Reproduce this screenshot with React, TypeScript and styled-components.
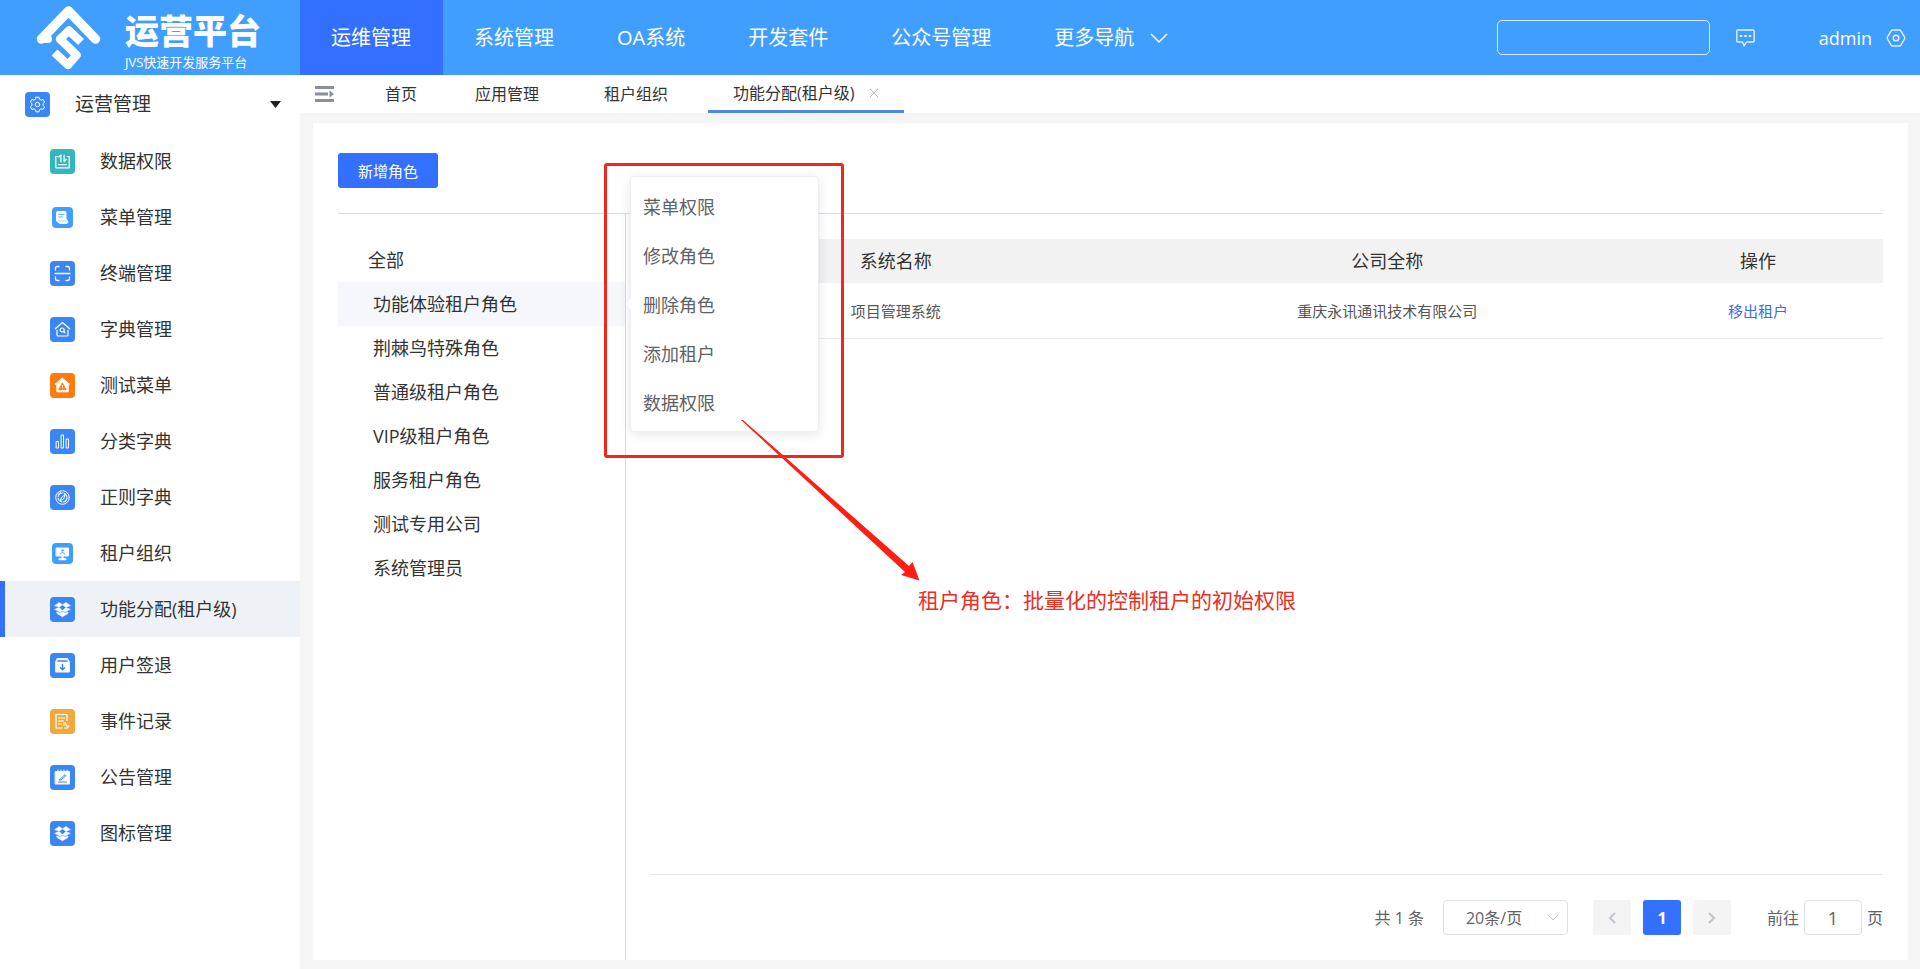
import React, { ReactNode } from "react";
import styled, { createGlobalStyle, css } from "styled-components";

const GlobalStyle = createGlobalStyle`
  *, *::before, *::after { box-sizing: border-box; }
  body {
    margin: 0;
    background: #f5f5f5;
    color: #333;
    font-family: "Open Sans", "Noto Sans CJK SC", sans-serif;
    font-size: 16px;
    line-height: 24px;
  }
  button, input, select { font: inherit; color: inherit; margin: 0; }
  button { border: 0; padding: 0; background: none; cursor: pointer; }
  ul { list-style: none; margin: 0; padding: 0; }
  a { text-decoration: none; color: inherit; }
  svg { display: block; flex: none; }
`;

const Page = styled.div`
  min-height: 100vh;
  display: flex;
  flex-direction: column;
`;

/* ---------- header ---------- */

const Header = styled.header`
  height: 75px;
  display: flex;
  align-items: stretch;
  background: #409eff;
  color: #fff;
`;

const Brand = styled.a`
  width: 300px;
  flex: none;
  display: flex;
  align-items: center;
  gap: 24px;
  padding-left: 36px;
`;

const BrandName = styled.span`
  display: flex;
  flex-direction: column;
  padding-top: 4px;
`;

const BrandTitle = styled.strong`
  font-size: 34px;
  line-height: 44px;
  font-weight: 900;
  font-style: oblique 8deg;
`;

const BrandNote = styled.small`
  font-size: 13px;
  line-height: 18px;
`;

const Nav = styled.nav`
  display: flex;
  flex: 1;
`;

const NavLink = styled.a<{ $active?: boolean }>`
  display: flex;
  align-items: center;
  gap: 16px;
  padding: 0 32px 0 31px;
  font-size: 20px;
  white-space: nowrap;
  background: ${(p) => (p.$active ? "#3370ff" : "transparent")};
`;

const HeaderTools = styled.div`
  display: flex;
  align-items: center;
  padding-right: 14px;
`;

const SearchBox = styled.input`
  width: 213px;
  height: 35px;
  padding: 0 12px;
  border: 1px solid #d9ecff;
  border-radius: 5px;
  background: transparent;
  outline: none;
`;

const MessageButton = styled.button`
  margin: 0 64px 0 26px;
`;

const UserButton = styled.button`
  display: flex;
  align-items: center;
  gap: 14px;
  font-size: 18px;
`;

/* ---------- sidebar ---------- */

const Body = styled.div`
  flex: 1;
  display: flex;
`;

const Sidebar = styled.aside`
  width: 300px;
  flex: none;
  background: #fff;
`;

const GroupButton = styled.button`
  width: 100%;
  height: 58px;
  display: flex;
  align-items: center;
  gap: 25px;
  padding: 0 19px 0 25px;
  font-size: 19px;
`;

const GroupLabel = styled.span`
  flex: 1;
  text-align: left;
`;

const MenuLink = styled.a<{ $active?: boolean }>`
  height: 56px;
  display: flex;
  align-items: center;
  gap: 25px;
  padding-left: 45px;
  border-left: 5px solid ${(p) => (p.$active ? "#3370ff" : "transparent")};
  background: ${(p) => (p.$active ? "#eef1f6" : "transparent")};
  font-size: 18px;
`;

const IconSlot = styled.span`
  width: 25px;
  height: 25px;
  display: grid;
  place-items: center;
  flex: none;
`;

const IconTile = styled.span<{ $tone: string; $small?: boolean }>`
  width: ${(p) => (p.$small ? 21 : 25)}px;
  height: ${(p) => (p.$small ? 21 : 25)}px;
  display: grid;
  place-items: center;
  border-radius: 4px;
  background: ${(p) => p.$tone};
`;

/* ---------- tabs ---------- */

const Main = styled.main`
  flex: 1;
  min-width: 0;
  display: flex;
  flex-direction: column;
`;

const TabBar = styled.div`
  height: 38px;
  display: flex;
  align-items: stretch;
  background: #fff;
`;

const CollapseButton = styled.button`
  padding: 0 26px 0 15px;
`;

const Tab = styled.a<{ $active?: boolean; $home?: boolean }>`
  display: flex;
  align-items: center;
  gap: 14px;
  padding: 0 25px;
  margin-right: ${(p) => (p.$home ? 8 : 15)}px;
  white-space: nowrap;
  ${(p) =>
    p.$active &&
    css`
      border-bottom: 3px solid #4f8ae0;
    `}
`;

/* ---------- content card ---------- */

const Card = styled.section`
  position: relative;
  flex: 1;
  display: flex;
  flex-direction: column;
  margin: 10px 12px 9px 13px;
  padding: 0 25px;
  background: #fff;
`;

const Toolbar = styled.div`
  padding: 30px 0 25px;
  border-bottom: 1px solid #dcdcdc;
`;

const PrimaryButton = styled.button`
  display: block;
  width: 100px;
  height: 35px;
  border-radius: 3px;
  background: #3370ff;
  color: #fff;
  font-size: 15px;
`;

const Split = styled.div`
  flex: 1;
  display: flex;
`;

const RolePanel = styled.div`
  width: 288px;
  flex: none;
  padding-top: 24px;
  border-right: 1px solid #dcdcdc;
`;

const RoleItem = styled.li<{ $active?: boolean }>`
  position: relative;
  background: ${(p) => (p.$active ? "#f5f7fc" : "transparent")};
`;

const RoleButton = styled.button<{ $root?: boolean }>`
  display: block;
  width: 100%;
  height: 44px;
  padding-left: ${(p) => (p.$root ? 30 : 35)}px;
  text-align: left;
  font-size: 18px;
`;

const Popover = styled.div`
  position: absolute;
  z-index: 2;
  left: calc(100% + 5px);
  top: 50%;
  transform: translateY(-50%);
  width: 189px;
  padding: 5px 0 4px;
  border: 1px solid #ebeef5;
  border-radius: 4px;
  background: #fff;
  box-shadow: 0 2px 12px rgba(0, 0, 0, 0.1);

  &::before {
    content: "";
    position: absolute;
    right: 100%;
    top: 50%;
    transform: translateY(-50%);
    border: 6px solid transparent;
    border-right-color: #fff;
    border-left: 0;
  }
`;

const PopoverItem = styled.button`
  display: block;
  width: 100%;
  height: 49px;
  padding-left: 12px;
  text-align: left;
  font-size: 18px;
  color: #606266;
`;

const TablePanel = styled.div`
  flex: 1;
  min-width: 0;
  display: flex;
  flex-direction: column;
  justify-content: space-between;
  padding: 25px 0 0 24px;
`;

const Table = styled.table`
  width: 100%;
  table-layout: fixed;
  border-collapse: separate;
  border-spacing: 0;
  text-align: center;
`;

const HeadCell = styled.th<{ $width?: number }>`
  width: ${(p) => (p.$width ? `${p.$width}px` : "auto")};
  height: 44px;
  padding: 0;
  background: #f2f2f2;
  font-size: 18px;
  font-weight: 400;
`;

const Cell = styled.td`
  height: 56px;
  padding: 0;
  border-bottom: 1px solid #ebebeb;
  font-size: 15px;
  color: #555;
`;

const RowAction = styled.button`
  color: #3c6cf0;
`;

/* ---------- pagination ---------- */

const Pagination = styled.div`
  display: flex;
  align-items: center;
  justify-content: flex-end;
  padding: 25px 0;
  border-top: 1px solid #e4e7ed;
  color: #606266;
`;

const SizeBox = styled.label`
  display: grid;
  align-items: center;
  margin: 0 25px 0 19px;

  & > * {
    grid-area: 1 / 1;
  }
  & > svg {
    justify-self: end;
    margin-right: 9px;
    pointer-events: none;
  }
`;

const SizeSelect = styled.select`
  width: 125px;
  height: 35px;
  padding: 0 30px 0 22px;
  appearance: none;
  border: 1px solid #dcdfe6;
  border-radius: 4px;
  background: #fff;
`;

const Pager = styled.div`
  display: flex;
  gap: 12px;
  margin-right: 36px;
`;

const PageButton = styled.button<{ $active?: boolean }>`
  width: 38px;
  height: 35px;
  display: grid;
  place-items: center;
  border-radius: 3px;
  font-weight: 700;
  background: ${(p) => (p.$active ? "#3370ff" : "#f4f4f5")};
  color: ${(p) => (p.$active ? "#fff" : "#c0c4cc")};
`;

const Jump = styled.label`
  display: flex;
  align-items: center;
  gap: 5px;
`;

const JumpInput = styled.input`
  width: 58px;
  height: 35px;
  padding: 0;
  border: 1px solid #dcdfe6;
  border-radius: 4px;
  text-align: center;
  font-size: 18px;
`;

/* ---------- annotation over the card ---------- */

const Highlight = styled.div`
  position: absolute;
  z-index: 3;
  left: 291px;
  top: 40px;
  width: 240px;
  height: 295px;
  border: 3px solid #ee281c;
  border-radius: 3px;
  pointer-events: none;
`;

const Arrow = styled.svg`
  position: absolute;
  z-index: 3;
  left: 428px;
  top: 297px;
  pointer-events: none;
`;

const Note = styled.p`
  position: absolute;
  left: 605px;
  top: 462px;
  margin: 0;
  font-size: 21px;
  line-height: 30px;
  color: #ea2f24;
  white-space: nowrap;
`;

/* ---------- icons ---------- */

const Glyph = ({ children, width = 1 }: { children: ReactNode; width?: number }) => (
  <svg
    width="17"
    height="17"
    viewBox="0 0 17 17"
    fill="none"
    stroke="#fff"
    strokeWidth={width}
    strokeLinecap="round"
    strokeLinejoin="round"
    aria-hidden="true"
  >
    {children}
  </svg>
);

const glyphs: Record<string, ReactNode> = {
  gear: (
    <Glyph>
      <path d="M7 1.200h3l.5 2.100 1.500.9 2.100-.7 1.500 2.600-1.600 1.500v1.800l1.600 1.500-1.500 2.600-2.100-.7-1.500.9-.5 2.100H7l-.5-2.100-1.500-.9-2.100.7-1.500-2.600L3 9.400V7.600L1.400 6.100l1.500-2.600L5 4.200l1.500-.9z" />
      <circle cx="8.500" cy="8.500" r="2.200" />
    </Glyph>
  ),
  data: (
    <Glyph width={1.2}>
      <path d="M3.800 3.500H1.800v11.300h13.400V3.500H13.200M4.500 11.700h8M6.900 8.700V2L4.900 4.200M10.100 2v6.700l2-2.200" />
    </Glyph>
  ),
  list: (
    <Glyph>
      <path d="M3.500 2.500h7.500a1 1 0 0 1 1 1v6l2 3.500-1 1.500H6l-3.500-2.500V3.500a1 1 0 0 1 1-1z" fill="#fff" />
      <path d="M4.500 5.500h5.500M4.500 8h4" stroke="#6db5ff" />
      <path d="M4.500 11.500l1.500 1 1.500-1 1.500 1 1.500-1 1.500 1" stroke="#a8d2ff" />
    </Glyph>
  ),
  scan: (
    <Glyph width={1.3}>
      <path d="M1.500 5V3.200q0-1.700 1.700-1.700H5M12 1.500h1.800q1.700 0 1.700 1.700V5M15.500 12v1.800q0 1.700-1.700 1.700H12M5 15.500H3.200q-1.700 0-1.700-1.700V12M1 8.500h15" />
    </Glyph>
  ),
  home: (
    <Glyph width={1.2}>
      <path d="M1.300 7.800L8.500 1.500l7.200 6.300M3 9.200v4.800q0 1 1 1h9q1 0 1-1V9.200" />
      <circle cx="8.200" cy="9" r="2" />
      <path d="M9.700 10.500l1.300 1.300" />
    </Glyph>
  ),
  alert: (
    <Glyph>
      <path d="M8.500 1.200l7 6h-1.300v7.600H2.800V7.200H1.500z" fill="#fff" />
      <path d="M8.500 6.200l3.400 6.500H5.100z" fill="#ff7a0f" stroke="#ff7a0f" />
      <path d="M8.500 8.500v2M8.500 12v.2" />
    </Glyph>
  ),
  bars: (
    <Glyph>
      <path d="M2.500 8.500h2v6.500h-2zM7.500 2h2v13h-2zM12.500 6h2v9h-2z" />
    </Glyph>
  ),
  compass: (
    <Glyph>
      <circle cx="8.500" cy="8.500" r="6.800" />
      <circle cx="8.500" cy="8.500" r="4.600" strokeDasharray="6 1.500" />
      <path d="M11.200 5.300l-3.800 3.400-1.200 3 3-1.500zM4 5.500l2.500-2M13 10l-2 3" />
    </Glyph>
  ),
  monitor: (
    <Glyph>
      <path d="M2.500 3h12v8h-12z" fill="#fff" />
      <path d="M8.500 11v3M5.500 14.200h6" strokeWidth="2" />
      <circle cx="8.500" cy="5.500" r=".8" stroke="#409eff" />
      <path d="M6.200 9q2.300-3.200 4.600 0" stroke="#409eff" />
    </Glyph>
  ),
  box: (
    <Glyph width={0.5}>
      <path
        fill="#fff"
        d="M5.200 1.500L8.500 3.800 5 6.300.800 4.800zM11.800 1.500L8.500 3.800 12 6.300l4.200-1.500zM1 8.200L5 6.500l3.500 3L6 11.200zM16 8.200l-4-1.700-3.500 3 2.500 1.700zM3 11l3 1.200 2.500-1.700 2.500 1.700 3-1.200v1.500l-5.500 3.300L3 12.500z"
      />
    </Glyph>
  ),
  archive: (
    <Glyph>
      <path d="M3.500 1.500h10l1.800 3.500v10H1.700V5z" fill="#fff" />
      <path d="M4 4h9M8.500 7.500v5M6.500 10.700l2 2 2-2" stroke="#3b86f5" strokeWidth="1.500" />
    </Glyph>
  ),
  log: (
    <Glyph width={1.2}>
      <path d="M13 7.500v-6H2v13.500h6M4.500 5h6M4.500 8h5M4.500 11h3M10 10h1.500l1 3h2.500l-1.500 2h-3M10 10v2" />
    </Glyph>
  ),
  notice: (
    <Glyph>
      <path d="M1.500 2.500h14v12.500h-14z" fill="#fff" />
      <path d="M4 1v2M7 1v2M10 1v2M13 1v2" />
      <path d="M4.500 13h8M6 10.200l5-4.500 1 1-5 4.300H5.500z" stroke="#3b86f5" />
    </Glyph>
  ),
};

const Logo = () => (
  <svg width="65" height="65" viewBox="0 0 65 65" fill="none" stroke="#fff" strokeLinejoin="round" aria-hidden="true">
    <path d="M5.500 34L32.500 6l27 28" strokeWidth="9.500" strokeLinecap="round" />
    <path d="M5.500 34l6.500 0" strokeWidth="8" strokeLinecap="round" />
    <path d="M45 37L33 25.500l-9 8.500 16.500 16-8.500 10L18.500 47.500" strokeWidth="8.500" />
  </svg>
);

const Chevron = ({ d, w, h, color = "currentColor", stroke = 2 }: { d: string; w: number; h: number; color?: string; stroke?: number }) => (
  <svg width={w} height={h} viewBox={`0 0 ${w} ${h}`} fill="none" stroke={color} strokeWidth={stroke} aria-hidden="true">
    <path d={d} />
  </svg>
);

/* ---------- data ---------- */

const BLUE = "#3b86f5";
const SKY = "#409eff";

const navItems = ["运维管理", "系统管理", "OA系统", "开发套件", "公众号管理"];

const menu: { label: string; icon: string; tone: string; small?: boolean }[] = [
  { label: "数据权限", icon: "data", tone: "#33b6bd" },
  { label: "菜单管理", icon: "list", tone: SKY, small: true },
  { label: "终端管理", icon: "scan", tone: BLUE },
  { label: "字典管理", icon: "home", tone: BLUE },
  { label: "测试菜单", icon: "alert", tone: "#ff7a0f" },
  { label: "分类字典", icon: "bars", tone: BLUE },
  { label: "正则字典", icon: "compass", tone: BLUE },
  { label: "租户组织", icon: "monitor", tone: SKY, small: true },
  { label: "功能分配(租户级)", icon: "box", tone: BLUE },
  { label: "用户签退", icon: "archive", tone: BLUE },
  { label: "事件记录", icon: "log", tone: "#f2a93b" },
  { label: "公告管理", icon: "notice", tone: BLUE },
  { label: "图标管理", icon: "box", tone: BLUE },
];

const roles = [
  "功能体验租户角色",
  "荆棘鸟特殊角色",
  "普通级租户角色",
  "VIP级租户角色",
  "服务租户角色",
  "测试专用公司",
  "系统管理员",
];

const roleActions = ["菜单权限", "修改角色", "删除角色", "添加租户", "数据权限"];

const CURRENT = "功能分配(租户级)";

export default function App() {
  return (
    <Page>
      <GlobalStyle />
      <Header>
        <Brand href="#">
          <Logo />
          <BrandName>
            <BrandTitle>运营平台</BrandTitle>
            <BrandNote>JVS快速开发服务平台</BrandNote>
          </BrandName>
        </Brand>
        <Nav>
          {navItems.map((item, i) => (
            <NavLink key={item} href="#" $active={i === 0}>
              {item}
            </NavLink>
          ))}
          <NavLink href="#">
            更多导航
            <Chevron d="M1 2l8 8 8-8" w={18} h={12} stroke={1.5} />
          </NavLink>
        </Nav>
        <HeaderTools>
          <SearchBox type="search" aria-label="搜索" />
          <MessageButton aria-label="消息">
            <svg width="19" height="18" viewBox="0 0 19 18" fill="none" stroke="#e8f4ff" strokeWidth="1.300" strokeLinejoin="round">
              <path d="M2 1h15q1.200 0 1.200 1.200v9.600q0 1.200-1.200 1.200h-6.500L8 16.800 6.500 13H2Q.8 13 .8 11.800V2.200Q.8 1 2 1z" />
              <path d="M3.800 7h2.400M8.300 7h2.400M12.800 7h2.400" strokeWidth="2.200" />
            </svg>
          </MessageButton>
          <UserButton>
            admin
            <svg width="20" height="18" viewBox="0 0 20 18" fill="none" stroke="#e8f4ff" strokeWidth="1.400" strokeLinejoin="round">
              <path d="M6.500 1h7q.8 0 1.200.7L18.500 8q.5 1 0 2l-3.800 6.300q-.4.700-1.200.7h-7q-.8 0-1.200-.7L1.500 10q-.5-1 0-2l3.800-6.300Q5.700 1 6.500 1z" />
              <circle cx="10" cy="9" r="2.800" />
            </svg>
          </UserButton>
        </HeaderTools>
      </Header>

      <Body>
        <Sidebar>
          <GroupButton>
            <IconTile $tone={BLUE}>{glyphs.gear}</IconTile>
            <GroupLabel>运营管理</GroupLabel>
            <svg width="11" height="7" viewBox="0 0 11 7" fill="#222" aria-hidden="true">
              <path d="M0 0h11L5.500 7z" />
            </svg>
          </GroupButton>
          <ul>
            {menu.map((m) => (
              <li key={m.label}>
                <MenuLink href="#" $active={m.label === CURRENT}>
                  <IconSlot>
                    <IconTile $tone={m.tone} $small={m.small}>
                      {glyphs[m.icon]}
                    </IconTile>
                  </IconSlot>
                  {m.label}
                </MenuLink>
              </li>
            ))}
          </ul>
        </Sidebar>

        <Main>
          <TabBar>
            <CollapseButton aria-label="收起菜单">
              <svg width="19" height="16" viewBox="0 0 19 16" fill="#8a8d9c">
                <path d="M0 0h19v3H0zM0 6.500h13v3H0zM0 13h19v3H0zM14.500 4.500L19 8l-4.500 3.500z" />
              </svg>
            </CollapseButton>
            <Tab href="#" $home>
              首页
            </Tab>
            <Tab href="#">应用管理</Tab>
            <Tab href="#">租户组织</Tab>
            <Tab href="#" $active>
              {CURRENT}
              <Chevron d="M1 1l8 8M9 1L1 9" w={10} h={10} color="#b4b8c0" stroke={1} />
            </Tab>
          </TabBar>

          <Card>
            <Toolbar>
              <PrimaryButton>新增角色</PrimaryButton>
            </Toolbar>
            <Split>
              <RolePanel>
                <RoleButton $root>全部</RoleButton>
                <ul>
                  {roles.map((role, i) => (
                    <RoleItem key={role} $active={i === 0}>
                      <RoleButton>{role}</RoleButton>
                      {i === 0 && (
                        <Popover>
                          {roleActions.map((action) => (
                            <PopoverItem key={action}>{action}</PopoverItem>
                          ))}
                        </Popover>
                      )}
                    </RoleItem>
                  ))}
                </ul>
              </RolePanel>

              <TablePanel>
                <Table>
                  <thead>
                    <tr>
                      <HeadCell>系统名称</HeadCell>
                      <HeadCell>公司全称</HeadCell>
                      <HeadCell $width={250}>操作</HeadCell>
                    </tr>
                  </thead>
                  <tbody>
                    <tr>
                      <Cell>项目管理系统</Cell>
                      <Cell>重庆永讯通讯技术有限公司</Cell>
                      <Cell>
                        <RowAction>移出租户</RowAction>
                      </Cell>
                    </tr>
                  </tbody>
                </Table>

                <Pagination>
                  <span>共 1 条</span>
                  <SizeBox>
                    <SizeSelect aria-label="每页条数" defaultValue="20">
                      <option value="20">20条/页</option>
                      <option value="50">50条/页</option>
                    </SizeSelect>
                    <Chevron d="M1 1l5 5 5-5" w={12} h={8} color="#c0c4cc" stroke={1} />
                  </SizeBox>
                  <Pager>
                    <PageButton aria-label="上一页">
                      <Chevron d="M7 1L2 6l5 5" w={8} h={12} />
                    </PageButton>
                    <PageButton $active>1</PageButton>
                    <PageButton aria-label="下一页">
                      <Chevron d="M1 1l5 5-5 5" w={8} h={12} />
                    </PageButton>
                  </Pager>
                  <Jump>
                    前往
                    <JumpInput defaultValue="1" />
                    页
                  </Jump>
                </Pagination>
              </TablePanel>
            </Split>

            <Highlight />
            <Arrow width="180" height="162" viewBox="0 0 180 162" fill="#ff1e12" aria-hidden="true">
              <path d="M0 0h2L168 146l3.500-4 7 18.500L160 155l4-3z" />
            </Arrow>
            <Note>租户角色：批量化的控制租户的初始权限</Note>
          </Card>
        </Main>
      </Body>
    </Page>
  );
}
